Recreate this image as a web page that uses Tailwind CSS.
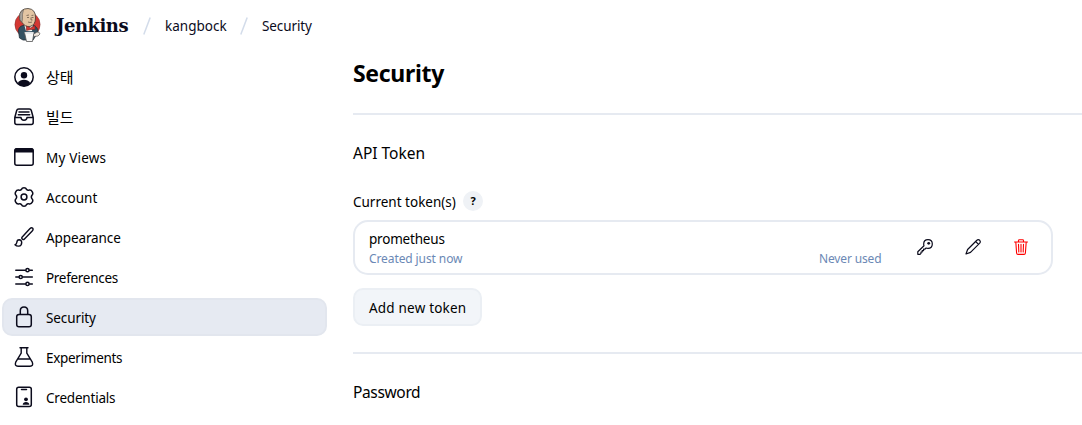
<!DOCTYPE html>
<html lang="ko">
<head>
<meta charset="utf-8">
<title>Security - Jenkins</title>
<script src="https://cdn.jsdelivr.net/npm/@tailwindcss/browser@4"></script>
</head>
<body class="h-[425px] w-[1082px] overflow-hidden bg-white font-['Noto_Sans','Noto_Sans_CJK_KR',sans-serif] text-[13.5px] leading-5 text-[#0b0b1c]">
<header class="flex h-[52px] items-center whitespace-nowrap pl-[14px]">
  <svg class="mb-[3px] h-[36px] w-[28px] shrink-0" viewBox="0 0 28 36">
    <ellipse cx="13.500" cy="17.500" rx="12.600" ry="12.500" fill="#d33833" stroke="#7d2a28" stroke-width=".5"/>
    <path d="M4.500 24Q4.500 19.500 9 18.500L19 18Q24 20 24 25L21 30L19 33H9L5.500 31Z" fill="#335061" stroke="#23313b" stroke-width=".8"/>
    <path d="M10 17L12 24L18 24L19 17Z" fill="#f7f3ee"/>
    <path d="M5.500 10Q5.500 1.500 14 1.500Q21.800 2 21.500 11Q21.500 18 16 19.500Q11 20 8.500 16Q5.500 14 5.500 10Z" fill="#e3c5a3" stroke="#3d3731" stroke-width=".8"/>
    <path d="M6 13Q4.500 5 9.500 3Q8 7 8.500 12L8 15Z" fill="#a8a39c" stroke="#5a534d" stroke-width=".5"/>
    <path d="M12.500 8.500l2.500-.5M17.500 8.500l2-.3M13 10.500h2M17.500 10.500h2M17 10.500v2.500h1.500M14 15q2 1 4 0" fill="none" stroke="#5b4c40" stroke-width=".7"/>
    <path d="M12.500 19L16.500 21L21 18.500V22.500L16.500 22.500L12.500 23.500Z" fill="#d33833" stroke="#7b2020" stroke-width=".6"/>
    <path d="M10.500 25.500H20L18.500 34.500H12.500Z" fill="#f8f8f8" stroke="#555" stroke-width=".8"/>
    <ellipse cx="15.200" cy="25.700" rx="4.700" ry="1" fill="#dfe3e6"/>
    <path d="M20 27l3-2q3 0 3 2l-2 2-4 .5" fill="#eee5dc" stroke="#555" stroke-width=".7"/>
  </svg>
  <span class="ml-[14px] w-[73px] font-['DejaVu_Serif',serif] text-[18px] font-bold tracking-[-0.5px] text-[#0b0b1c]">Jenkins</span>
  <svg class="ml-[14px] h-[18px] w-[8px]" viewBox="0 0 8 18" fill="none" stroke="#d3dcea" stroke-width="1.500"><path d="M7.200 .5L.8 17.500"/></svg>
  <span class="ml-[14px] w-[62px]">kangbock</span>
  <svg class="ml-[13px] h-[18px] w-[8px]" viewBox="0 0 8 18" fill="none" stroke="#d3dcea" stroke-width="1.500"><path d="M7.200 .5L.8 17.500"/></svg>
  <span class="ml-[14px] tracking-[-0.1px]">Security</span>
</header>
<div class="flex">
  <nav class="ml-[2px] mt-[6px] flex w-[325px] shrink-0 flex-col gap-[2px] whitespace-nowrap text-black">
    <a class="flex h-[38px] items-center gap-3 pl-3"><svg class="size-5" viewBox="0 0 20 20"><circle cx="10" cy="10" r="9.200" fill="none" stroke="#0b0b1c" stroke-width="1.500"/><circle cx="10" cy="8.300" r="3.200" fill="#0b0b1c"/><path d="M3.700 16Q6 12.800 10 12.800T16.300 16Q14 19.200 10 19.200T3.700 16Z" fill="#0b0b1c"/></svg><span class="text-[15px]">상태</span></a>
    <a class="flex h-[38px] items-center gap-3 pl-3"><svg class="size-5" viewBox="0 0 20 20" fill="none" stroke="#0b0b1c" stroke-width="1.500" stroke-linejoin="round" stroke-linecap="round"><path d="M.8 10.500L2.700 3.500Q3.100 2 4.700 2H15.300Q16.900 2 17.300 3.500L19.200 10.500V15.500Q19.200 17.500 17.200 17.500H2.800Q.8 17.500 .8 15.500ZM.8 10.500H7Q7.200 13.200 10 13.200T13 10.500H19.200M5 5H15M4.300 7.700H15.700"/></svg><span class="text-[15px]">빌드</span></a>
    <a class="flex h-[38px] items-center gap-3 pl-3"><svg class="size-5" viewBox="0 0 20 20"><rect x=".8" y="1.700" width="18.400" height="16.600" rx="2" fill="none" stroke="#0b0b1c" stroke-width="1.500"/><path d="M.5 5.500V3Q.8 1 3 1H17Q19.200 1 19.500 3V5.500Z" fill="#0b0b1c"/></svg><span class="pt-[2px] tracking-[0.2px]">My Views</span></a>
    <a class="flex h-[38px] items-center gap-3 pl-3"><svg class="size-5" viewBox="0 0 20 20" fill="none" stroke="#0b0b1c" stroke-width="1.500" stroke-linejoin="round"><path d="M7.600 2.300Q8 .8 10 .8T12.400 2.300Q13.500 3.600 15.200 3.100Q17.200 2.700 18.300 4.800Q19.400 6.800 18 8.200Q16.700 10 18 11.800Q19.400 13.200 18.300 15.200Q17.200 17.300 15.200 16.900Q13.500 16.400 12.400 17.700Q12 19.200 10 19.200T7.600 17.700Q6.500 16.400 4.800 16.900Q2.800 17.300 1.700 15.200Q.6 13.200 2 11.800Q3.300 10 2 8.200Q.6 6.800 1.700 4.800Q2.800 2.700 4.800 3.100Q6.500 3.600 7.600 2.300Z"/><circle cx="10" cy="10" r="2.900"/></svg><span class="pt-[2px]">Account</span></a>
    <a class="flex h-[38px] items-center gap-3 pl-3"><svg class="size-5" viewBox="0 0 20 20" fill="none" stroke="#0b0b1c" stroke-width="1.400" stroke-linejoin="round" stroke-linecap="round"><path d="M18.700 1.200Q17.500 .2 15.800 1.700L8 10.300Q7.400 11.100 8.200 11.900L8.600 12.300Q9.500 12.900 10.200 12.200L18 4.200Q19.700 2.500 18.700 1.200ZM5.200 12.700Q3 12.700 2.800 15.500Q2.600 17.500 1 17.700Q2.500 19.300 4.800 19.100Q7.700 18.700 7.700 15.400Q7.500 12.900 5.200 12.700Z"/></svg><span class="pt-[2px] tracking-[-0.1px]">Appearance</span></a>
    <a class="flex h-[38px] items-center gap-3 pl-3"><svg class="size-5" viewBox="0 0 20 20" fill="none" stroke="#0b0b1c" stroke-width="1.500" stroke-linecap="round"><path d="M1.800 3.200H11.500M15.500 3.200H18.300M1.800 10H4.700M8.700 10H18.300M1.800 16.900H11.500M15.500 16.900H18.300"/><circle cx="13.500" cy="3.200" r="1.600"/><circle cx="6.700" cy="10" r="1.600"/><circle cx="13.500" cy="16.900" r="1.600"/></svg><span class="pt-[2px] tracking-[-0.3px]">Preferences</span></a>
    <a class="flex h-[38px] items-center gap-[10px] rounded-[10px] border-2 border-[#e2e6ee] bg-[#e6eaf2] pl-[10px]"><svg class="mr-[2px] h-[22px] w-5" viewBox="0 0 20 22" fill="none" stroke="#0b0b1c" stroke-width="1.500" stroke-linejoin="round"><path d="M6.300 8.500V4.800Q6.300 1 10 1T13.700 4.800V8.500"/><rect x="2.700" y="8.500" width="14.600" height="12.300" rx="2.300"/></svg><span class="pt-[2px] tracking-[-0.1px]">Security</span></a>
    <a class="flex h-[38px] items-center gap-3 pl-3"><svg class="size-5" viewBox="0 0 20 20" fill="none" stroke="#0b0b1c" stroke-width="1.400" stroke-linejoin="round" stroke-linecap="round"><path d="M6 .8H14M7.200 .8V6.200L1.700 15.200Q.3 19.200 4 19.200H16Q19.700 19.200 18.300 15.200L12.800 6.200V.8M4.300 12H15.700"/></svg><span class="pt-[2px] tracking-[-0.3px]">Experiments</span></a>
    <a class="flex h-[38px] items-center gap-3 pl-3"><svg class="h-[22px] w-5" viewBox="0 0 20 22" fill="none" stroke="#0b0b1c" stroke-width="1.500" stroke-linecap="round"><rect x="2.700" y="1.200" width="14.600" height="19.400" rx="2"/><path d="M7.500 3.500H12.500"/><g fill="#0b0b1c" stroke="none"><circle cx="12" cy="13.300" r="1.900"/><path d="M8.700 18.800Q9 16 12 16T15.400 18.800Z"/></g></svg><span class="pt-[2px] tracking-[-0.2px]">Credentials</span></a>
  </nav>
  <main class="ml-[26px] w-[729px] shrink-0 whitespace-nowrap text-black">
    <h1 class="mt-[5px] h-8 text-[23px] font-bold leading-8 tracking-[-0.3px]">Security</h1>
    <hr class="mt-[24px] border-t-2 border-[#e6eaf1]">
    <h2 class="mt-[26px] h-6 text-[15.5px] leading-6">API Token</h2>
    <div class="mt-[26px] flex h-5 items-center"><span class="w-[110px] pt-[2px]">Current token(s)</span><span class="flex size-5 items-center justify-center rounded-full bg-[#eff2f6] text-[11px] font-bold">?</span></div>
    <section class="mt-[9px] flex h-[55px] w-[700px] rounded-[15px] border-2 border-[#e6eaf1] pl-[14px]">
      <div class="w-[450px] pt-[7px]">
        <div class="h-5 tracking-[-0.2px]">prometheus</div>
        <div class="h-5 text-[12px] tracking-[-0.1px] text-[#6b88b5]">Created just now</div>
      </div>
      <div class="w-[98px] pt-[27px] text-[12px] tracking-[-0.15px] text-[#6b88b5]">Never used</div>
      <div class="flex h-[50px] items-center gap-[32px]">
        <svg class="size-4" viewBox="0 0 16 16" fill="none" stroke="#0b0b1c" stroke-width="1.200" stroke-linejoin="round"><path d="M11 .7Q15.300 .7 15.300 5Q15.300 9.300 11 9.300Q9.800 9.300 9.100 9L8 10.200H6.600V11.600H5.200V13H4V14.300L3 15.300H.8V12.700L7 6.700Q6.600 5.900 6.700 5Q6.700 .7 11 .7Z"/><circle cx="11.700" cy="4.300" r="1.400" fill="#0b0b1c" stroke="none"/></svg>
        <svg class="size-4" viewBox="0 0 16 16" fill="none" stroke="#0b0b1c" stroke-width="1.200" stroke-linejoin="round"><path d="M14.700 1.300Q13.200 0 11.600 1.500L2.600 10.500L1 15L5.500 13.400L14.500 4.400Q16 2.800 14.700 1.300ZM10.700 2.500L13.500 5.300"/></svg>
        <svg class="size-4" viewBox="0 0 16 16" fill="none" stroke="#f00" stroke-width="1.100" stroke-linejoin="round" stroke-linecap="round"><path d="M1.500 3H14.500M2.800 3L3.600 14Q3.700 15.400 5 15.400H11Q12.300 15.400 12.400 14L13.200 3M5.500 3V1.600Q5.500 .7 6.400 .7H9.600Q10.500 .7 10.500 1.600V3M8 5.300V13M5.500 5.300L5.800 13M10.500 5.300L10.200 13"/></svg>
      </div>
    </section>
    <button class="mt-[13px] block h-[38px] w-[129px] rounded-[10px] border-2 border-[#ebeff4] bg-[#f2f5f9] pl-[14px] pt-[2px] text-left tracking-[0.2px]">Add new token</button>
    <hr class="mt-[26px] border-t-2 border-[#e6eaf1]">
    <h2 class="mt-[26px] h-6 text-[15.5px] leading-6 tracking-[-0.35px]">Password</h2>
  </main>
</div>
</body>
</html>
